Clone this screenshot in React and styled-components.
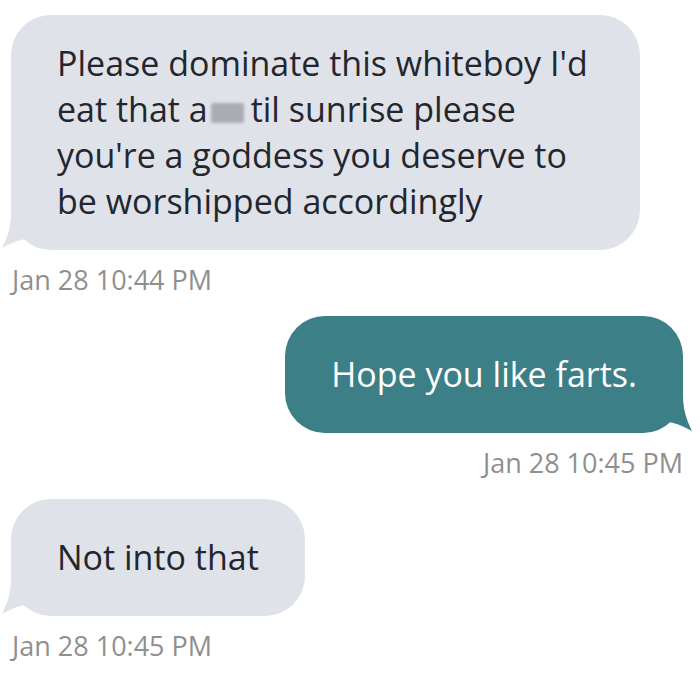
import React from 'react'
import styled, { createGlobalStyle } from 'styled-components'

const GlobalStyle = createGlobalStyle`
  html, body {
    margin: 0;
    padding: 0;
    background: #ffffff;
  }
  body {
    font-family: "Open Sans", Roboto, "Liberation Sans", sans-serif;
  }
`

const Thread = styled.div`
  display: flex;
  flex-direction: column;
  width: 700px;
  min-height: 673px;
  box-sizing: border-box;
  padding: 15px 17px 0 11px;

  & > * {
    flex-shrink: 0;
  }
`

const Bubble = styled.div`
  position: relative;
  align-self: ${p => (p.$sent ? 'flex-end' : 'flex-start')};
  box-sizing: border-box;
  width: ${p => (p.$width ? `${p.$width}px` : 'auto')};
  min-height: 117px;
  display: flex;
  align-items: center;
  padding: 25px 46px 26px 46px;
  border-radius: 40px;
  background: ${p => (p.$sent ? '#3c7f87' : '#dfe3e9')};
  color: ${p => (p.$sent ? '#ffffff' : '#23272d')};
  font-size: 34px;
  line-height: 46px;
  white-space: pre-line;
`

const BubbleText = styled.span`
  position: relative;
  z-index: 1;
`

const TailSvg = styled.svg`
  position: absolute;
  bottom: 0;
  width: 60px;
  height: 60px;
  ${p =>
    p.$sent
      ? 'right: -9px; transform: scaleX(-1);'
      : 'left: -9px;'}
`

const Censor = styled.span`
  display: inline-block;
  width: 33px;
  height: 20px;
  margin: 0 7px -1px 3px;
  background: #a9adb3;
  filter: blur(1.5px);
  border-radius: 2px;
`

const Stamp = styled.div`
  align-self: ${p => (p.$sent ? 'flex-end' : 'flex-start')};
  margin: 15px 0 21px 1px;
  font-size: 27px;
  line-height: 30px;
  color: #8f8f8f;
`

const Tail = ({ sent, color }) => (
  <TailSvg $sent={sent} viewBox="0 0 60 60" aria-hidden="true">
    <path
      d="M9 0 L9 22 C9 36 6 46 0 58 C10 53 20 48 30 49 C38 50 42 56 50 60 L60 60 L60 0 Z"
      fill={color}
    />
  </TailSvg>
)

const App = () => (
  <>
    <GlobalStyle />
    <Thread>
      <Bubble $width={629}>
        <BubbleText>
          Please dominate this whiteboy I'd{'\n'}eat that a<Censor />til sunrise please{'\n'}you're a goddess you deserve to{'\n'}be worshipped accordingly
        </BubbleText>
        <Tail color="#dfe3e9" />
      </Bubble>
      <Stamp>Jan 28 10:44 PM</Stamp>

      <Bubble $sent>
        <BubbleText>Hope you like farts.</BubbleText>
        <Tail sent color="#3c7f87" />
      </Bubble>
      <Stamp $sent>Jan 28 10:45 PM</Stamp>

      <Bubble>
        <BubbleText>Not into that</BubbleText>
        <Tail color="#dfe3e9" />
      </Bubble>
      <Stamp>Jan 28 10:45 PM</Stamp>
    </Thread>
  </>
)

export default App
